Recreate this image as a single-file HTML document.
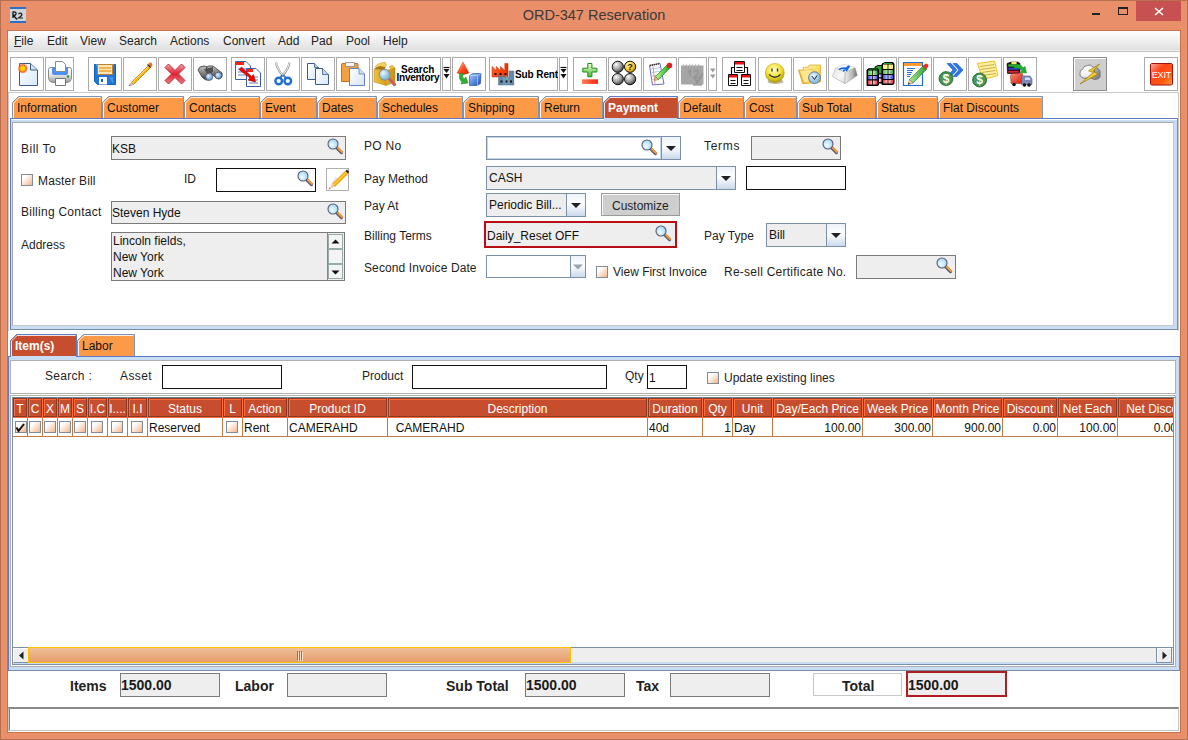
<!DOCTYPE html><html><head><meta charset="utf-8"><style>
*{box-sizing:border-box;margin:0;padding:0}
html,body{width:1188px;height:740px;overflow:hidden}
body{position:relative;background:#E9906A;font-family:"Liberation Sans",sans-serif;font-size:12px;color:#1a1a1a}
.a{position:absolute}
.t{position:absolute;white-space:nowrap;font-size:12px;line-height:14px;color:#1e1e1e}
.tb{position:absolute;top:57px;height:34px;border:1px solid #ababab;background:#fff}
.tb svg{position:absolute;left:0;top:0}
.tab{position:absolute;top:96px;height:22px;background:#FD9A48;border-top:1px solid #7d93b3;border-right:1px solid #8ea2c4}
.tab .tl{position:absolute;left:-1px;top:5px;width:1px;height:17px;background:#7d93b3}
.tab .tc{position:absolute;left:-1px;top:-1px;width:7px;height:7px;background:linear-gradient(to bottom right,#fff 0,#fff 45%,#7d93b3 45%,#7d93b3 60%,transparent 60%)}
.tab span{position:absolute;left:5px;top:3px;font-size:12px;line-height:14px;color:#111;white-space:nowrap}
.fld{position:absolute;background:#eee;border:1px solid #8e8e8e}
.fldw{position:absolute;background:#fff;border:1px solid #111}
.ft{position:absolute;left:1px;top:4px;font-size:12px;line-height:14px;color:#111;white-space:nowrap}
.cb{position:absolute;width:12px;height:12px;border:1px solid #7f8b96;background:linear-gradient(135deg,#fff 25%,#f3b58a 100%)}
.hd{position:absolute;top:398px;height:19px;background:#C64E2E;border:1px solid #ec8660;outline:1px solid #C64E2E;color:#fff;font-size:12px;line-height:16px;text-align:center;white-space:nowrap;overflow:hidden}
.cl{position:absolute;top:417px;height:19px;border-right:1px solid #d9946b;border-bottom:1px solid #d9946b;font-size:12px;line-height:18px;color:#111;white-space:nowrap;overflow:hidden}
</style></head><body>
<div class="a" style="left:0px;top:0px;width:1188px;height:740px;border:1px solid #B5704F"></div>
<div class="a" style="left:7px;top:30px;width:1174px;height:703px;border:1px solid #C8734C"></div>
<div class="a" style="left:8px;top:31px;width:1172px;height:701px;background:#fff"></div>
<div class="a" style="left:0;top:6px;width:1188px;text-align:center;font-size:14.5px;color:#3a3a3a;line-height:18px">ORD-347 Reservation</div>
<svg class="a" style="left:10px;top:7px" width="16" height="16"><rect x="0" y="0" width="16" height="16" fill="#cfd6d8"/><rect x="0" y="0" width="16" height="2" fill="#2a70c8"/><rect x="0" y="14" width="16" height="2" fill="#2a70c8"/><path d="M3 4.5V11M3 5Q6.5 4.5 6 7Q5.5 8.5 3.5 8.5L7 12.5" stroke="#111" stroke-width="1.3" fill="none"/><path d="M8.5 7Q10 5.5 11.5 6.5Q12.5 8 10.5 9.5L8.5 11H13" stroke="#222" stroke-width="1.2" fill="none"/></svg>
<div class="a" style="left:1092px;top:13px;width:8px;height:2px;background:#1e2326"></div>
<div class="a" style="left:1118px;top:7px;width:10px;height:8px;border:1px solid #1e2326;border-top-width:2px"></div>
<div class="a" style="left:1136px;top:1px;width:45px;height:20px;background:#C75050"></div>
<svg class="a" style="left:1154px;top:7px" width="10" height="9"><path d="M1 1L9 8M9 1L1 8" stroke="#fff" stroke-width="1.6"/></svg>
<div class="a" style="left:8px;top:31px;width:1172px;height:19px;background:linear-gradient(#fff,#e0e0e0)"></div>
<div class="a" style="left:8px;top:50px;width:1172px;height:1px;background:#f0f0f0"></div>
<div class="a" style="left:8px;top:51px;width:1172px;height:1px;background:#c4c4c4"></div>
<div class="t" style="left:14px;top:34px;font-size:12px;color:#222"><u>F</u>ile</div>
<div class="t" style="left:47px;top:34px;font-size:12px;color:#222">Edit</div>
<div class="t" style="left:80px;top:34px;font-size:12px;color:#222">View</div>
<div class="t" style="left:119px;top:34px;font-size:12px;color:#222">Search</div>
<div class="t" style="left:170px;top:34px;font-size:12px;color:#222">Actions</div>
<div class="t" style="left:223px;top:34px;font-size:12px;color:#222">Convert</div>
<div class="t" style="left:278px;top:34px;font-size:12px;color:#222">Add</div>
<div class="t" style="left:311px;top:34px;font-size:12px;color:#222">Pad</div>
<div class="t" style="left:346px;top:34px;font-size:12px;color:#222">Pool</div>
<div class="t" style="left:383px;top:34px;font-size:12px;color:#222">Help</div>
<div class="a" style="left:8px;top:92px;width:1171px;height:1px;background:#c9c9c9"></div>
<div class="a" style="left:8px;top:92px;width:1px;height:239px;background:#c9c9c9"></div>
<div class="a" style="left:1178px;top:92px;width:1px;height:239px;background:#c9c9c9"></div>
<div class="tb" style="left:10px;width:34px;"><svg style="position:absolute;left:-1px;top:-1px" width="34" height="34">
<defs><linearGradient id="i0g" x1="0" y1="0" x2="1" y2="1"><stop offset="0" stop-color="#ffffff"/><stop offset="1" stop-color="#d6e8f8"/></linearGradient>
<radialGradient id="i0s"><stop offset="0" stop-color="#ffe600"/><stop offset=".45" stop-color="#ffc000"/><stop offset=".7" stop-color="#ff5a1e"/><stop offset="1" stop-color="#ff5a1e" stop-opacity="0"/></radialGradient></defs>
<path d="M9.5 6.5H20.5L27.5 13V28.5H9.5Z" fill="url(#i0g)" stroke="#3f5a8a" stroke-width="1"/>
<path d="M20.5 6.5V13H27" fill="#cfe4f6" stroke="#3f5a8a" stroke-width="1"/>
<circle cx="12.7" cy="11.5" r="5.2" fill="url(#i0s)"/>
</svg></div>
<div class="tb" style="left:45px;width:29px;"><svg style="position:absolute;left:-1px;top:-1px" width="29" height="34">
<defs><linearGradient id="i1b" x1="0" y1="0" x2="0" y2="1"><stop offset="0" stop-color="#ffffff"/><stop offset=".5" stop-color="#e6e6e6"/><stop offset="1" stop-color="#9a9a9a"/></linearGradient></defs>
<path d="M3.5 12.5Q3.5 10.5 6 10.5H24Q26.5 10.5 26.5 12.5V20Q26.5 25.5 21 25.5H9Q3.5 25.5 3.5 20Z" fill="url(#i1b)" stroke="#8a8a8a" stroke-width="1"/>
<path d="M7 10.5H23V16Q23 18 21 18H9Q7 18 7 16Z" fill="#4f8ff0"/>
<path d="M10.5 4.5H17.5L20.5 7.5V14.5H10.5Z" fill="#fff" stroke="#8a8a8a" stroke-width="1"/>
<path d="M10.5 21.5H20.5V28.5H10.5Z" fill="#fff" stroke="#777" stroke-width="1"/>
<circle cx="23" cy="19.5" r="1.2" fill="#1fa02a"/>
</svg></div>
<div class="tb" style="left:88px;width:34px;"><svg style="position:absolute;left:-1px;top:-1px" width="34" height="34">
<path d="M6.5 7.5H27.5V27.5H9.5L6.5 24.5Z" fill="#1f78d8" stroke="#1060c0" stroke-width="1"/>
<path d="M8 8H26" stroke="#7cc0ff" stroke-width="1"/>
<path d="M9.5 7.5H24.5V17.5H9.5Z" fill="#fbe8b8" stroke="#c08030" stroke-width="1"/>
<path d="M11 11H23M11 14H23" stroke="#f0a030" stroke-width="1.6"/>
<path d="M11 20H19V27.5H11Z" fill="#fff"/>
<path d="M13 22H15V25H13Z" fill="#1f60c8"/>
<path d="M21 20H25V27" fill="#60a8f0" opacity=".6"/>
</svg></div>
<div class="tb" style="left:123px;width:34px;"><svg style="position:absolute;left:-1px;top:-1px" width="34" height="34">
<defs><linearGradient id="i3p" x1="0" y1="0" x2="1" y2="0"><stop offset="0" stop-color="#ffd23a"/><stop offset="1" stop-color="#e08a00"/></linearGradient></defs>
<path d="M4 29L12 18L14 21Z" fill="#d8d8d8" opacity=".5"/>
<path d="M8.5 25.5L26 8L28 10L10.5 27.5Z" fill="#ffb400" stroke="#c07800" stroke-width=".8"/>
<path d="M9 26L26.5 8.5" stroke="#ffe27a" stroke-width="1"/>
<path d="M8.5 25.5L10.5 27.5L6 29Z" fill="#f0d0a0" stroke="#888" stroke-width=".5"/>
<path d="M6 29L7 27.5L7.5 28.5Z" fill="#333"/>
<path d="M25 7L27 5.5Q29 5 29 7L29.5 9L28 10Z" fill="#ff6a20"/>
<path d="M24.5 7.5L27.5 10.5" stroke="#333" stroke-width="1.2"/>
</svg></div>
<div class="tb" style="left:158px;width:34px;"><svg style="position:absolute;left:-1px;top:-1px" width="34" height="34">
<defs><linearGradient id="i4x" x1="0" y1="0" x2="0" y2="1"><stop offset="0" stop-color="#f7a0a8"/><stop offset=".5" stop-color="#e02030"/><stop offset="1" stop-color="#f08088"/></linearGradient></defs>
<path d="M7 10.5L10.5 7L17 13.5L23.5 7L27 10.5L20.5 17L27 23.5L23.5 27L17 20.5L10.5 27L7 23.5L13.5 17Z" fill="url(#i4x)" stroke="#b83040" stroke-width="1"/>
</svg></div>
<div class="tb" style="left:193px;width:34px;"><svg style="position:absolute;left:-1px;top:-1px" width="34" height="34">
<defs><linearGradient id="i5b" x1="0" y1="0" x2="0" y2="1"><stop offset="0" stop-color="#c8c8c8"/><stop offset="1" stop-color="#3c3c3c"/></linearGradient>
<radialGradient id="i5l" cx=".4" cy=".4"><stop offset="0" stop-color="#e8f4ff"/><stop offset="1" stop-color="#6aa2e8"/></radialGradient></defs>
<path d="M5 13Q6 9 11 9L19 11L14 18L16 23Q12 24 9 20Z" fill="url(#i5b)" stroke="#333" stroke-width=".8"/>
<path d="M13 11Q15 8 20 9L29 16Q30 21 26 22L23 21Z" fill="url(#i5b)" stroke="#333" stroke-width=".8"/>
<path d="M11 12L20 10L20 15L14 17Z" fill="#505050"/>
<circle cx="16.2" cy="19.8" r="3.6" fill="url(#i5l)" stroke="#555" stroke-width=".8"/>
<circle cx="25.3" cy="18.5" r="3.4" fill="url(#i5l)" stroke="#555" stroke-width=".8"/>
</svg></div>
<div class="tb" style="left:231px;width:34px;"><svg style="position:absolute;left:-1px;top:-1px" width="34" height="34">
<path d="M4.5 4.5H15L19.5 9V22.5H4.5Z" fill="#fff" stroke="#3a5fb0" stroke-width="1"/>
<path d="M5 5H13V8H5Z" fill="#ff2010"/>
<path d="M7 12H17M7 15H17M7 18H17" stroke="#3a5fb0" stroke-width=".8"/>
<path d="M15.5 11.5H25L29.5 16V29.5H15.5Z" fill="#fff" stroke="#3a5fb0" stroke-width="1"/>
<path d="M16 12H22V15H16Z" fill="#ff2010"/>
<path d="M18 20H27M18 23H27M18 26H27" stroke="#3a5fb0" stroke-width=".8"/>
<path d="M8 12.5L10.5 10L20.5 19.5L22.5 17.5L24.5 25L17 23L19 21Z" fill="#ff0000" stroke="#900" stroke-width=".6"/>
</svg></div>
<div class="tb" style="left:266px;width:34px;"><svg style="position:absolute;left:-1px;top:-1px" width="34" height="34">
<path d="M10 5.5Q11 12 16.5 18" stroke="#9a9a9a" stroke-width="2.2" fill="none"/>
<path d="M10 5.5Q11 12 16.5 18" stroke="#f2f2f2" stroke-width="1" fill="none"/>
<path d="M23.5 5.5Q22.5 12 17 18" stroke="#9a9a9a" stroke-width="2.2" fill="none"/>
<path d="M23.5 5.5Q22.5 12 17 18" stroke="#f2f2f2" stroke-width="1" fill="none"/>
<path d="M16.5 18L14 21M17 18L20 21" stroke="#4a7ab8" stroke-width="2"/>
<circle cx="12.7" cy="24" r="3.3" fill="none" stroke="#1e6fd0" stroke-width="2.4"/>
<circle cx="21.8" cy="24" r="3.3" fill="none" stroke="#1e6fd0" stroke-width="2.4"/>
</svg></div>
<div class="tb" style="left:301px;width:34px;"><svg style="position:absolute;left:-1px;top:-1px" width="34" height="34">
<defs><linearGradient id="i8d" x1="0" y1="0" x2="1" y2="1"><stop offset="0" stop-color="#ffffff"/><stop offset="1" stop-color="#d8e8f8"/></linearGradient></defs>
<path d="M6.5 6.5H13.5L17.5 10.5V22.5H6.5Z" fill="url(#i8d)" stroke="#3f5a8a" stroke-width="1"/>
<path d="M13.5 6.5V10.5H17.5" fill="#bcd8f0" stroke="#3f5a8a" stroke-width=".8"/>
<path d="M14.5 11.5H21.5L27.5 17.5V27.5H14.5Z" fill="url(#i8d)" stroke="#3f5a8a" stroke-width="1"/>
<path d="M21.5 11.5V17.5H27.5" fill="#bcd8f0" stroke="#3f5a8a" stroke-width=".8"/>
</svg></div>
<div class="tb" style="left:336px;width:34px;"><svg style="position:absolute;left:-1px;top:-1px" width="34" height="34">
<defs><linearGradient id="i9d" x1="0" y1="0" x2="1" y2="1"><stop offset="0" stop-color="#ffffff"/><stop offset="1" stop-color="#d4e6f8"/></linearGradient></defs>
<path d="M5.5 7.5Q5.5 6.5 6.5 6.5H21Q22 6.5 22 7.5V24.5H5.5Z" fill="#f2a040" stroke="#c07020" stroke-width="1"/>
<path d="M9.5 5.5H18.5V9.5H9.5Z" fill="#f4f4f4" stroke="#888" stroke-width=".8"/>
<path d="M13.5 11.5H23L28.5 17V28.5H13.5Z" fill="url(#i9d)" stroke="#6a80c0" stroke-width="1"/>
<path d="M23 11.5V17H28.5" fill="#c8dcf0" stroke="#6a80c0" stroke-width=".8"/>
</svg></div>
<div class="tb" style="left:372px;width:69px;"><svg style="position:absolute;left:-1px;top:-1px" width="69" height="34">
<defs><linearGradient id="i10b" x1="0" y1="0" x2="1" y2="0"><stop offset="0" stop-color="#f0c040"/><stop offset="1" stop-color="#d8a020"/></linearGradient>
<linearGradient id="i10r" x1="0" y1="0" x2="1" y2="0"><stop offset="0" stop-color="#e8b030"/><stop offset="1" stop-color="#c89010"/></linearGradient>
<radialGradient id="i10l" cx=".35" cy=".35"><stop offset="0" stop-color="#eefaff"/><stop offset="1" stop-color="#88c0e0"/></radialGradient></defs>
<path d="M3 10L6 7L13 5L14.5 8L13 11Z" fill="#f8d060" stroke="#c89020" stroke-width=".5"/>
<path d="M17 10L20 8L23 11L20 13Z" fill="#f0c040" stroke="#c89020" stroke-width=".5"/>
<path d="M2 12L13 14L14 28.5L2 25Z" fill="url(#i10b)" stroke="#b88818" stroke-width=".5"/>
<path d="M13 14L23 11V25L14 28.5Z" fill="url(#i10r)" stroke="#b88818" stroke-width=".5"/>
<path d="M3 11L8 9L13 10L13 13.5L2.5 12Z" fill="#a87810"/>
<path d="M17.5 22L22.5 27.5" stroke="#8a8aa0" stroke-width="3.4" stroke-linecap="round"/>
<path d="M17.8 22.2L22.2 27.2" stroke="#f05030" stroke-width="2" stroke-linecap="round" stroke-dasharray="1.2 1"/>
<circle cx="12.7" cy="17.7" r="5.4" fill="url(#i10l)" stroke="#8a8a8a" stroke-width="1"/>
<text x="29" y="15.5" font-family="Liberation Sans" font-weight="bold" font-size="10" fill="#000" letter-spacing="0">Search</text>
<text x="24.5" y="24" font-family="Liberation Sans" font-weight="bold" font-size="10" fill="#000" letter-spacing="-0.25">Inventory</text>
</svg></div>
<div class="tb" style="left:442px;width:9px;"><svg style="position:absolute;left:-1px;top:-1px" width="9" height="34"><path d="M1.5 10.5H7.5" stroke="#111" stroke-width="1.2"/><path d="M1.5 12H7.5L4.5 16Z" fill="#111"/>
<path d="M1.5 17H7.5L4.5 21.5Z" fill="#111"/></svg></div>
<div class="tb" style="left:452px;width:34px;"><svg style="position:absolute;left:-1px;top:-1px" width="34" height="34">
<defs><linearGradient id="i12c" x1="0" y1="0" x2="1" y2="1"><stop offset="0" stop-color="#ffd0a0"/><stop offset=".5" stop-color="#ff5020"/><stop offset="1" stop-color="#d02010"/></linearGradient>
<linearGradient id="i12b" x1="0" y1="0" x2="1" y2="1"><stop offset="0" stop-color="#a8d0ff"/><stop offset="1" stop-color="#1848b8"/></linearGradient></defs>
<path d="M11 5L17 16Q11 19 5 16Z" fill="url(#i12c)" stroke="#e04010" stroke-width=".5"/>
<path d="M8 16Q6 22 10 25L9 27L16 26L14 20L12 22Q10 20 11 17Z" fill="#30b030" stroke="#208020" stroke-width=".5"/>
<path d="M17.5 18.5L21 16.5H29L28.5 26.5L25 28.5H17.5Z" fill="url(#i12b)" stroke="#2040a0" stroke-width=".6"/>
<path d="M17.5 18.5H25.5L29 16.5M25.5 18.5V28.5" stroke="#c8e0ff" stroke-width=".6" fill="none"/>
</svg></div>
<div class="tb" style="left:489px;width:69px;"><svg style="position:absolute;left:-1px;top:-1px" width="69" height="34">
<defs><linearGradient id="i13r" x1="0" x2="1"><stop offset="0" stop-color="#ff5a20"/><stop offset=".8" stop-color="#ff3a00"/><stop offset="1" stop-color="#e03000"/></linearGradient>
<linearGradient id="i13b" x1="0" x2="1"><stop offset="0" stop-color="#5a82a0"/><stop offset=".5" stop-color="#7aa0bc"/><stop offset="1" stop-color="#5a82a0"/></linearGradient></defs>
<path d="M3 20V9.5L7.3 13.5V9.5L11.5 13.5V9.5L15.8 13.5V6.5H19V20Z" fill="url(#i13r)" stroke="#c02800" stroke-width=".5"/>
<path d="M5.5 17H7.5M10.5 17H12.5M15.5 17H17.5" stroke="#111" stroke-width="2"/>
<path d="M9.5 28V18L13 21V18L16.5 21V18L20 21V14H24.8V28Z" fill="url(#i13b)" stroke="#4a6a88" stroke-width=".5"/>
<path d="M11.5 24.5H13.5M16.5 24.5H18.5M21 24.5H23" stroke="#111" stroke-width="2"/>
<text x="26" y="21" font-family="Liberation Sans" font-weight="bold" font-size="10" fill="#000" letter-spacing="-0.1">Sub Rent</text>
</svg></div>
<div class="tb" style="left:559px;width:9px;"><svg style="position:absolute;left:-1px;top:-1px" width="9" height="34"><path d="M1.5 10.5H7.5" stroke="#111" stroke-width="1.2"/><path d="M1.5 12H7.5L4.5 16Z" fill="#111"/>
<path d="M1.5 17H7.5L4.5 21.5Z" fill="#111"/></svg></div>
<div class="tb" style="left:573px;width:34px;"><svg style="position:absolute;left:-1px;top:-1px" width="34" height="34">
<defs><linearGradient id="i15p" x1="0" y1="0" x2="0" y2="1"><stop offset="0" stop-color="#f4ffd8"/><stop offset="1" stop-color="#48b830"/></linearGradient>
<linearGradient id="i15m" x1="0" y1="0" x2="1" y2="0"><stop offset="0" stop-color="#ff8050"/><stop offset="1" stop-color="#ff2010"/></linearGradient></defs>
<path d="M14.8 6.5H18.9V11.2H23.9V15H18.9V19.8H14.8V15H9.8V11.2H14.8Z" fill="url(#i15p)" stroke="#1f8a1a" stroke-width="1"/>
<path d="M9 22.3H25V26.9H9Z" fill="url(#i15m)"/>
</svg></div>
<div class="tb" style="left:608px;width:34px;"><svg style="position:absolute;left:-1px;top:-1px" width="34" height="34">
<defs><radialGradient id="i16g" cx=".35" cy=".3" r=".75"><stop offset="0" stop-color="#fafafa"/><stop offset=".6" stop-color="#9a9a9a"/><stop offset="1" stop-color="#3a3a3a"/></radialGradient>
<radialGradient id="i16y" cx=".35" cy=".3" r=".75"><stop offset="0" stop-color="#fff8c0"/><stop offset=".6" stop-color="#ffc820"/><stop offset="1" stop-color="#c08000"/></radialGradient></defs>
<circle cx="9.8" cy="9.8" r="5.6" fill="url(#i16g)" stroke="#111" stroke-width="1"/>
<circle cx="22.1" cy="9.8" r="5.6" fill="url(#i16y)" stroke="#111" stroke-width="1"/>
<circle cx="9.8" cy="22.1" r="5.6" fill="url(#i16g)" stroke="#111" stroke-width="1"/>
<circle cx="22.1" cy="22.1" r="5.6" fill="url(#i16g)" stroke="#111" stroke-width="1"/>
<text x="22.1" y="13.3" text-anchor="middle" font-family="Liberation Sans" font-weight="bold" font-size="9" fill="#111">?</text>
</svg></div>
<div class="tb" style="left:643px;width:34px;"><svg style="position:absolute;left:-1px;top:-1px" width="34" height="34">
<defs><linearGradient id="i17g" x1="0" y1="0" x2="1" y2="0"><stop offset="0" stop-color="#b0ff80"/><stop offset="1" stop-color="#20a020"/></linearGradient></defs>
<path d="M6.5 8.5L17 6.5L21 27L9.5 28Z" fill="#fff" stroke="#6a70c8" stroke-width="1"/>
<path d="M8 12L18 10.5M8.5 15.5L18.5 14M9 19L19 17.5M9.5 22.5L19.5 21" stroke="#8ab0e8" stroke-width=".7"/>
<path d="M10 9L12 27" stroke="#f08060" stroke-width=".8"/>
<path d="M7 8.5L17 6.5" stroke="#333" stroke-width="1.8" stroke-dasharray="1 1"/>
<path d="M12.5 19.5L24.5 7.5L27.5 10.5L15.5 22.5Z" fill="url(#i17g)" stroke="#208020" stroke-width=".7"/>
<path d="M12.5 19.5L15.5 22.5L11.5 23.5Z" fill="#f0d090" stroke="#555" stroke-width=".5"/>
<circle cx="26.5" cy="8.5" r="2.8" fill="#e02020"/>
</svg></div>
<div class="tb" style="left:678px;width:29px;"><svg style="position:absolute;left:-1px;top:-1px" width="29" height="34">
<path d="M3 8.5H25.5V27.5H3Z" fill="#a6a6a6"/>
<path d="M15 26H24V28.7H15Z" fill="#a0a0a0"/>
<path d="M5 7.5L22 7.5L23 9V11H5Z" fill="#b0b0b0"/>
<g fill="#f4f4f4"><rect x="6" y="6.5" width="2" height="2"/><rect x="9" y="6.5" width="2" height="2"/><rect x="12" y="6.5" width="2" height="2"/><rect x="15" y="6.5" width="2" height="2"/><rect x="18" y="6.5" width="2" height="2"/><rect x="21" y="6.5" width="2" height="2"/></g>
<path d="M7.5 9L7 11.5M10.5 9L10 11.5M13.5 9L13 11.5M16.5 9L16 11.5M19.5 9L19 11.5M22.5 9L22 11.5" stroke="#8a8a8a" stroke-width=".8"/>
<path d="M10 15L12 13.5V20" stroke="#949494" stroke-width="1.6" fill="none"/>
<path d="M15.5 15Q16.5 13 19 13.5Q21 14.5 19.5 17L16 20.5H21" stroke="#949494" stroke-width="1.4" fill="none"/>
<path d="M16 19.7L19.2 25.7L24.7 16.5" stroke="#949494" stroke-width="1.8" fill="none"/>
</svg></div>
<div class="tb" style="left:708px;width:9px;"><svg style="position:absolute;left:-1px;top:-1px" width="9" height="34"><path d="M2 11.5H7.5L4.8 15.5Z" fill="#9a9a9a"/><path d="M2 17.5H7.5L4.8 21.5Z" fill="#9a9a9a"/></svg></div>
<div class="tb" style="left:722px;width:34px;"><svg style="position:absolute;left:-1px;top:-1px" width="34" height="34">
<path d="M9.5 17.5V10.5H25.5V17.5" fill="none" stroke="#111" stroke-width="1.2"/>
<path d="M12.5 4.5H22.5V15.5H12.5Z" fill="#fff" stroke="#111" stroke-width="1"/>
<path d="M13 5H22V7.5H13Z" fill="#f01010"/>
<path d="M14.5 10.5H20.5M14.5 13.5H20.5" stroke="#111" stroke-width="1"/>
<path d="M6.5 17.5H15.5V28.5H6.5Z" fill="#fff" stroke="#111" stroke-width="1"/>
<path d="M7 18H15V20.5H7Z" fill="#f01010"/>
<path d="M8.5 23.5H13.5M8.5 26.5H13.5" stroke="#111" stroke-width="1"/>
<path d="M19.5 17.5H28.5V28.5H19.5Z" fill="#fff" stroke="#111" stroke-width="1"/>
<path d="M20 18H28V20.5H20Z" fill="#f01010"/>
<path d="M21.5 23.5H26.5M21.5 26.5H26.5" stroke="#111" stroke-width="1"/>
</svg></div>
<div class="tb" style="left:758px;width:34px;"><svg style="position:absolute;left:-1px;top:-1px" width="34" height="34">
<defs><radialGradient id="i21y" cx=".45" cy=".35" r=".7"><stop offset="0" stop-color="#fffbd0"/><stop offset=".55" stop-color="#f4e030"/><stop offset="1" stop-color="#a09000"/></radialGradient></defs>
<ellipse cx="17.5" cy="24.5" rx="8" ry="2.5" fill="#5a4a10" opacity=".4"/>
<circle cx="16.8" cy="15.9" r="9.5" fill="url(#i21y)" stroke="#a89800" stroke-width=".5"/>
<path d="M14 11.5V14.5M19.5 11.5V14.5" stroke="#333" stroke-width="1.3"/>
<path d="M11 17.5Q16.8 23 22.5 17.5" stroke="#333" stroke-width="1.3" fill="none"/>
</svg></div>
<div class="tb" style="left:793px;width:34px;"><svg style="position:absolute;left:-1px;top:-1px" width="34" height="34">
<defs><linearGradient id="i22f" x1="0" y1="0" x2="1" y2="1"><stop offset="0" stop-color="#fff6b0"/><stop offset="1" stop-color="#f0c820"/></linearGradient>
<radialGradient id="i22c" cx=".4" cy=".35"><stop offset="0" stop-color="#f0fbff"/><stop offset="1" stop-color="#8ac0e8"/></radialGradient></defs>
<path d="M5.5 13H11L13 26.5H9.5Z" fill="#f0b830" stroke="#d09010" stroke-width=".6"/>
<path d="M10 10.5L15 10L16.5 8H27.5V25L13 26.5Z" fill="url(#i22f)" stroke="#d8a020" stroke-width=".7"/>
<path d="M6.5 13.5L20 12.5L19 24L11 26Z" fill="#fde890" stroke="#e0b030" stroke-width=".5"/>
<circle cx="21.5" cy="20.7" r="5.9" fill="url(#i22c)" stroke="#707888" stroke-width="1"/>
<path d="M18.8 19L21.5 22.5L24 18.5" stroke="#222" stroke-width="1" fill="none"/>
</svg></div>
<div class="tb" style="left:828px;width:34px;"><svg style="position:absolute;left:-1px;top:-1px" width="34" height="34">
<defs><linearGradient id="i23l" x1="0" y1="0" x2="1" y2="1"><stop offset="0" stop-color="#e4e4e4"/><stop offset=".6" stop-color="#f8f8f8"/><stop offset="1" stop-color="#d8d8d8"/></linearGradient>
<linearGradient id="i23r" x1="0" y1="0" x2="1" y2="0"><stop offset="0" stop-color="#f0f0f0"/><stop offset=".6" stop-color="#b8b8b8"/><stop offset="1" stop-color="#6a6a6a"/></linearGradient></defs>
<path d="M7.7 11L16 7.3L27 10.5L29.3 18.3L16.9 26.6L4.3 19.3Z" fill="#9a9a9a" opacity=".5" transform="translate(0 .5)"/>
<path d="M7.7 11L17.3 15.1L16.9 26.6L4.3 19.3Z" fill="url(#i23l)" stroke="#b0b0b0" stroke-width=".5"/>
<path d="M17.3 15.1L27 10.5L29.3 18.3L16.9 26.6Z" fill="url(#i23r)" stroke="#a0a0a0" stroke-width=".5"/>
<path d="M7.7 11L16 7.3L27 10.5L17.3 15.1Z" fill="#fafafa" stroke="#c8c8c8" stroke-width=".6"/>
<path d="M11.5 12.2Q15 10.5 19 11.5M15.5 13.8L20.5 9.3L21 9.6L18.5 13.5" stroke="#1a6ae8" stroke-width="1.7" fill="none" stroke-linecap="round"/>
</svg></div>
<div class="tb" style="left:863px;width:34px;"><svg style="position:absolute;left:-1px;top:-1px" width="34" height="34">
<defs>
<linearGradient id="cg" x1="0" x2="1"><stop offset="0" stop-color="#40b040"/><stop offset=".5" stop-color="#c8f0c0"/><stop offset="1" stop-color="#30a030"/></linearGradient>
<linearGradient id="cb" x1="0" x2="1"><stop offset="0" stop-color="#3038e8"/><stop offset=".5" stop-color="#d0d4ff"/><stop offset="1" stop-color="#3038e8"/></linearGradient>
<linearGradient id="cr" x1="0" x2="1"><stop offset="0" stop-color="#f02030"/><stop offset=".5" stop-color="#ffd0d4"/><stop offset="1" stop-color="#f02030"/></linearGradient>
<linearGradient id="cy" x1="0" x2="1"><stop offset="0" stop-color="#f0f040"/><stop offset=".5" stop-color="#ffffc0"/><stop offset="1" stop-color="#e8e830"/></linearGradient>
</defs>
<g stroke="#000" stroke-width="1">
<path d="M12 10L15 8.5H21V26H12Z" fill="#30a030"/>
<path d="M13 17H20V21H13Z" fill="url(#cb)"/><path d="M13 21H20V25.5H13Z" fill="url(#cr)"/>
<path d="M19 7L22 5.5H30L31 7V26.5L29.5 27.5H19Z" fill="#000"/>
<path d="M19.5 7H30.5V12.5H19.5Z" fill="url(#cy)"/>
<path d="M19.5 12.5H30.5V17.5H19.5Z" fill="url(#cg)"/>
<path d="M19.5 17.5H30.5V22.5H19.5Z" fill="url(#cb)"/>
<path d="M19.5 22.5H30.5V27H19.5Z" fill="url(#cr)"/>
<path d="M25 7V27" stroke-width=".8"/>
<path d="M4 13L6 11.5H14.5L15.5 13V28L14 28.5H4Z" fill="#000"/>
<path d="M4.5 13H15V18.5H4.5Z" fill="url(#cg)"/>
<path d="M4.5 18.5H15V23H4.5Z" fill="url(#cb)"/>
<path d="M4.5 23H15V28H4.5Z" fill="url(#cr)"/>
<path d="M9.5 13V28" stroke-width=".8"/>
</g>
<path d="M6 12H14M21 6.5H29" stroke="#20a020" stroke-width="1"/>
</svg></div>
<div class="tb" style="left:898px;width:34px;"><svg style="position:absolute;left:-1px;top:-1px" width="34" height="34">
<defs><linearGradient id="i25g" x1="0" y1="0" x2="1" y2="0"><stop offset="0" stop-color="#a8e890"/><stop offset="1" stop-color="#2a9a30"/></linearGradient></defs>
<path d="M5.5 5.5H24.5V28.5H5.5Z" fill="#fff" stroke="#1f6fd0" stroke-width="1.2"/>
<path d="M6 6H24V9H6Z" fill="#ff9a30"/>
<path d="M9 11.5H17M9 13.5H15M9 15.5H14M9 17.5H13M9 19.5H12" stroke="#2a70d0" stroke-width="1"/>
<path d="M18 21L19 28H8Z" fill="#d8e8f8" opacity=".6"/>
<path d="M11.5 22.5L25.5 8.5L29 12L15 26Z" fill="url(#i25g)" stroke="#2a7a2a" stroke-width=".6"/>
<path d="M11.5 22.5L15 26L10 27.5Z" fill="#f8d890" stroke="#666" stroke-width=".5"/>
<path d="M10 27.5L10.8 25.5L12 26.8Z" fill="#111"/>
<path d="M24.5 9.5L27 7Q28.5 6 30 7.5Q31 9 30 10L27.5 12.5Z" fill="#e83020"/>
</svg></div>
<div class="tb" style="left:933px;width:34px;"><svg style="position:absolute;left:-1px;top:-1px" width="34" height="34">
<path d="M14 6.5L18 6.5L24 13L18 19.5H14L20 13Z" fill="#2a78e8" stroke="#1850c0" stroke-width=".6"/>
<path d="M20 6.5H24L30 13L24 19.5H20L26 13Z" fill="#2a78e8" stroke="#1850c0" stroke-width=".6"/>
<circle cx="13" cy="21.6" r="7" fill="#3a8a48" stroke="#2a6a38" stroke-width=".8"/>
<circle cx="13" cy="21.6" r="5.8" fill="#4a9a58"/>
<text x="13" y="25.8" text-anchor="middle" font-family="Liberation Sans" font-weight="bold" font-size="12" fill="#fff">$</text></svg></div>
<div class="tb" style="left:968px;width:34px;"><svg style="position:absolute;left:-1px;top:-1px" width="34" height="34">
<path d="M9.5 6.5L26.5 4L30 18.5L15 22.5Z" fill="#fdf0a0" stroke="#f0c020" stroke-width="1"/>
<path d="M12 9.5L26 7.5M12.5 12.5L27 10.5M13.5 15.5L27.5 13.5M14 18.5L28 16.5" stroke="#c8a838" stroke-width=".9"/>
<circle cx="11.6" cy="23" r="7" fill="#3a8a48" stroke="#2a6a38" stroke-width=".8"/>
<circle cx="11.6" cy="23" r="5.8" fill="#4a9a58"/>
<text x="11.6" y="27.2" text-anchor="middle" font-family="Liberation Sans" font-weight="bold" font-size="12" fill="#fff">$</text></svg></div>
<div class="tb" style="left:1003px;width:34px;"><svg style="position:absolute;left:-1px;top:-1px" width="34" height="34">
<g stroke="#111" stroke-width=".6">
<path d="M4 6.5L8 5H15L17 6.5V15.5L14 16.5H4.5Z" fill="#111"/>
<path d="M5 7H16V10H5Z" fill="#30b030"/><path d="M5 10.5H16V13H5Z" fill="#3040e0"/><path d="M5 13.5H16V16H5Z" fill="#e02030"/>
</g>
<ellipse cx="11" cy="6" rx="3" ry="1.3" fill="#f0f060"/>
<path d="M11 8Q18 6 20 11L22 9.5L23.5 16L17 15.5L19 13.5Q17 10.5 11 11Z" fill="#20b030" stroke="#108020" stroke-width=".5"/>
<defs><linearGradient id="i28t" x1="0" y1="0" x2="1" y2="1"><stop offset="0" stop-color="#ff8a70"/><stop offset="1" stop-color="#d02010"/></linearGradient></defs>
<path d="M7.5 18.5L9 16.5H19.5V26.5H8Z" fill="url(#i28t)" stroke="#a02010" stroke-width=".5"/>
<path d="M18.5 19H27L29 22V27.5H18.5Z" fill="#8088b8" stroke="#505880" stroke-width=".6"/>
<path d="M22 20.5H26.5L27.5 23H22Z" fill="#d0e0ff"/>
<circle cx="11" cy="27.5" r="1.8" fill="#111"/><circle cx="21.5" cy="28" r="1.8" fill="#111"/><circle cx="26" cy="28" r="1.8" fill="#111"/>
</svg></div>
<div class="tb" style="left:1073px;width:34px;background:#cfcfcf;border-color:#8c8c8c"><svg style="position:absolute;left:-1px;top:-1px" width="34" height="34">
<defs><radialGradient id="i29c" cx=".3" cy=".3" r=".9"><stop offset="0" stop-color="#ffffff"/><stop offset=".55" stop-color="#f0f0f0"/><stop offset="1" stop-color="#a8a8a8"/></radialGradient>
<linearGradient id="i29d" x1="0" y1="0" x2="1" y2="1"><stop offset="0" stop-color="#c8c8c8"/><stop offset="1" stop-color="#707070"/></linearGradient></defs>
<path d="M1 1.5H33M1.5 1V33" stroke="#fff" stroke-width="1"/>
<path d="M19 11Q23 9 25.5 12Q28 14 27 17Q28 21 24.5 22Q21 23.5 18 21Z" fill="url(#i29d)" stroke="#555" stroke-width=".6"/>
<path d="M9 20.5Q6.5 19.5 7 16.5Q6.5 13 9.5 12.5Q10.5 8.5 14.5 8.5Q17.5 7 19.5 9.5Q22 10.5 21.5 13.5Q22.5 17.5 19.5 19.5Q17 22 13.5 21Q11 22 9 20.5Z" fill="url(#i29c)" stroke="#444" stroke-width=".6"/>
<path d="M26.5 7L15.5 13.8L20.5 15.6L7 27L25 17L19.8 14.2Z" fill="#f8d020" stroke="#8a6a00" stroke-width=".6" stroke-linejoin="round"/>
</svg></div>
<div class="tb" style="left:1144px;width:34px;"><svg style="position:absolute;left:-1px;top:-1px" width="34" height="34">
<defs><linearGradient id="i30e" x1="0" y1="0" x2="1" y2="1"><stop offset="0" stop-color="#f0b0a0"/><stop offset=".35" stop-color="#ff4418"/><stop offset=".7" stop-color="#ff5a10"/><stop offset="1" stop-color="#ffa040"/></linearGradient></defs>
<path d="M7.5 6.5H27.5L28.5 7.5V27L27.5 28H7.5L6.5 27V7.5Z" fill="url(#i30e)" stroke="#a01010" stroke-width="1"/>
<text x="17.4" y="21" text-anchor="middle" font-family="Liberation Sans" font-size="9" fill="#fff" letter-spacing="-0.2">EXIT</text>
</svg></div>
<div class="a" style="left:12px;top:96px;width:90px;height:22px;"><svg class="a" style="left:0;top:0" width="90" height="22"><path d="M0.5 22V6.5L6.5 0.5H89.5V22" fill="#FD9A48" stroke="#7d93b3" stroke-width="1"/><path d="M1.5 22V7L7 1.5H88.5" fill="none" stroke="#fff" stroke-width="1" opacity=".85"/></svg><span class="t" style="left:5px;top:5px;color:#111">Information</span></div>
<div class="a" style="left:102px;top:96px;width:82px;height:22px;"><svg class="a" style="left:0;top:0" width="82" height="22"><path d="M0.5 22V6.5L6.5 0.5H81.5V22" fill="#FD9A48" stroke="#7d93b3" stroke-width="1"/><path d="M1.5 22V7L7 1.5H80.5" fill="none" stroke="#fff" stroke-width="1" opacity=".85"/></svg><span class="t" style="left:5px;top:5px;color:#111">Customer</span></div>
<div class="a" style="left:184px;top:96px;width:76px;height:22px;"><svg class="a" style="left:0;top:0" width="76" height="22"><path d="M0.5 22V6.5L6.5 0.5H75.5V22" fill="#FD9A48" stroke="#7d93b3" stroke-width="1"/><path d="M1.5 22V7L7 1.5H74.5" fill="none" stroke="#fff" stroke-width="1" opacity=".85"/></svg><span class="t" style="left:5px;top:5px;color:#111">Contacts</span></div>
<div class="a" style="left:260px;top:96px;width:57px;height:22px;"><svg class="a" style="left:0;top:0" width="57" height="22"><path d="M0.5 22V6.5L6.5 0.5H56.5V22" fill="#FD9A48" stroke="#7d93b3" stroke-width="1"/><path d="M1.5 22V7L7 1.5H55.5" fill="none" stroke="#fff" stroke-width="1" opacity=".85"/></svg><span class="t" style="left:5px;top:5px;color:#111">Event</span></div>
<div class="a" style="left:317px;top:96px;width:60px;height:22px;"><svg class="a" style="left:0;top:0" width="60" height="22"><path d="M0.5 22V6.5L6.5 0.5H59.5V22" fill="#FD9A48" stroke="#7d93b3" stroke-width="1"/><path d="M1.5 22V7L7 1.5H58.5" fill="none" stroke="#fff" stroke-width="1" opacity=".85"/></svg><span class="t" style="left:5px;top:5px;color:#111">Dates</span></div>
<div class="a" style="left:377px;top:96px;width:86px;height:22px;"><svg class="a" style="left:0;top:0" width="86" height="22"><path d="M0.5 22V6.5L6.5 0.5H85.5V22" fill="#FD9A48" stroke="#7d93b3" stroke-width="1"/><path d="M1.5 22V7L7 1.5H84.5" fill="none" stroke="#fff" stroke-width="1" opacity=".85"/></svg><span class="t" style="left:5px;top:5px;color:#111">Schedules</span></div>
<div class="a" style="left:463px;top:96px;width:76px;height:22px;"><svg class="a" style="left:0;top:0" width="76" height="22"><path d="M0.5 22V6.5L6.5 0.5H75.5V22" fill="#FD9A48" stroke="#7d93b3" stroke-width="1"/><path d="M1.5 22V7L7 1.5H74.5" fill="none" stroke="#fff" stroke-width="1" opacity=".85"/></svg><span class="t" style="left:5px;top:5px;color:#111">Shipping</span></div>
<div class="a" style="left:539px;top:96px;width:64px;height:22px;"><svg class="a" style="left:0;top:0" width="64" height="22"><path d="M0.5 22V6.5L6.5 0.5H63.5V22" fill="#FD9A48" stroke="#7d93b3" stroke-width="1"/><path d="M1.5 22V7L7 1.5H62.5" fill="none" stroke="#fff" stroke-width="1" opacity=".85"/></svg><span class="t" style="left:5px;top:5px;color:#111">Return</span></div>
<div class="a" style="left:603px;top:96px;width:75px;height:22px;"><svg class="a" style="left:0;top:0" width="75" height="22"><path d="M0.5 22V6.5L6.5 0.5H74.5V22" fill="#C64E2E" stroke="#5b7cc1" stroke-width="1"/><path d="M1.5 22V7L7 1.5H73.5" fill="none" stroke="#fff" stroke-width="1" opacity=".85"/></svg><span class="t" style="left:5px;top:5px;color:#fff;font-weight:bold">Payment</span></div>
<div class="a" style="left:678px;top:96px;width:66px;height:22px;"><svg class="a" style="left:0;top:0" width="66" height="22"><path d="M0.5 22V6.5L6.5 0.5H65.5V22" fill="#FD9A48" stroke="#7d93b3" stroke-width="1"/><path d="M1.5 22V7L7 1.5H64.5" fill="none" stroke="#fff" stroke-width="1" opacity=".85"/></svg><span class="t" style="left:5px;top:5px;color:#111">Default</span></div>
<div class="a" style="left:744px;top:96px;width:53px;height:22px;"><svg class="a" style="left:0;top:0" width="53" height="22"><path d="M0.5 22V6.5L6.5 0.5H52.5V22" fill="#FD9A48" stroke="#7d93b3" stroke-width="1"/><path d="M1.5 22V7L7 1.5H51.5" fill="none" stroke="#fff" stroke-width="1" opacity=".85"/></svg><span class="t" style="left:5px;top:5px;color:#111">Cost</span></div>
<div class="a" style="left:797px;top:96px;width:79px;height:22px;"><svg class="a" style="left:0;top:0" width="79" height="22"><path d="M0.5 22V6.5L6.5 0.5H78.5V22" fill="#FD9A48" stroke="#7d93b3" stroke-width="1"/><path d="M1.5 22V7L7 1.5H77.5" fill="none" stroke="#fff" stroke-width="1" opacity=".85"/></svg><span class="t" style="left:5px;top:5px;color:#111">Sub Total</span></div>
<div class="a" style="left:876px;top:96px;width:62px;height:22px;"><svg class="a" style="left:0;top:0" width="62" height="22"><path d="M0.5 22V6.5L6.5 0.5H61.5V22" fill="#FD9A48" stroke="#7d93b3" stroke-width="1"/><path d="M1.5 22V7L7 1.5H60.5" fill="none" stroke="#fff" stroke-width="1" opacity=".85"/></svg><span class="t" style="left:5px;top:5px;color:#111">Status</span></div>
<div class="a" style="left:938px;top:96px;width:105px;height:22px;"><svg class="a" style="left:0;top:0" width="105" height="22"><path d="M0.5 22V6.5L6.5 0.5H104.5V22" fill="#FD9A48" stroke="#7d93b3" stroke-width="1"/><path d="M1.5 22V7L7 1.5H103.5" fill="none" stroke="#fff" stroke-width="1" opacity=".85"/></svg><span class="t" style="left:5px;top:5px;color:#111">Flat Discounts</span></div>
<div class="a" style="left:10px;top:118px;width:1168px;height:212px;background:#c8dcf4;border:1px solid #5b7cc1;border-right-color:#7a8ca0;border-bottom-color:#7a8ca0"></div>
<div class="a" style="left:12px;top:122px;width:1162px;height:204px;background:#fff;border:1px solid #a9a9a9;border-right-color:#c9c9c9;border-bottom-color:#c9c9c9"></div>
<div class="a" style="left:11px;top:119px;width:1166px;height:1px;background:#fff"></div>
<div class="a" style="left:604px;top:118px;width:73px;height:2px;background:#c8dcf4"></div>
<div class="t" style="left:21px;top:142px;letter-spacing:.5px">Bill To</div>
<div class="a" style="left:111px;top:136px;width:235px;height:24px;background:#eee;border:1px solid #7a7a7a;"></div>
<div class="t" style="left:112px;top:142px;color:#111">KSB</div>
<svg class="a" style="left:326px;top:137px" width="18" height="18"><defs><radialGradient id="gl" cx=".4" cy=".6" r=".6"><stop offset="0" stop-color="#f4fdff"/><stop offset="1" stop-color="#9fd8f5"/></radialGradient></defs><path d="M10.5 10.5L15.5 15.5" stroke="#5a5a7a" stroke-width="3.2" stroke-linecap="round"/><path d="M11 10L16 15" stroke="#f5a030" stroke-width="1.8" stroke-linecap="round"/><circle cx="7" cy="7" r="5" fill="url(#gl)" stroke="#5a5a78" stroke-width="1.1"/></svg>
<div class="cb" style="left:21px;top:174px"></div>
<div class="t" style="left:38px;top:174px;letter-spacing:.15px">Master Bill</div>
<div class="t" style="left:184px;top:172px;">ID</div>
<div class="a" style="left:216px;top:168px;width:100px;height:24px;background:#fff;border:1px solid #111;"></div>
<svg class="a" style="left:296px;top:169px" width="18" height="18"><defs><radialGradient id="gl" cx=".4" cy=".6" r=".6"><stop offset="0" stop-color="#f4fdff"/><stop offset="1" stop-color="#9fd8f5"/></radialGradient></defs><path d="M10.5 10.5L15.5 15.5" stroke="#5a5a7a" stroke-width="3.2" stroke-linecap="round"/><path d="M11 10L16 15" stroke="#f5a030" stroke-width="1.8" stroke-linecap="round"/><circle cx="7" cy="7" r="5" fill="url(#gl)" stroke="#5a5a78" stroke-width="1.1"/></svg>
<div class="a" style="left:326px;top:168px;width:23px;height:23px;border:1px solid #b0b0b0;background:#fff"></div>
<svg class="a" style="left:326px;top:168px" width="23" height="23"><path d="M3 20L9 9L12 10Z" fill="#d8d8d8" opacity=".6"/><path d="M6.5 16L19.5 3L22 5.5L9 18.5Z" fill="#ffb000" stroke="#d08000" stroke-width=".6"/><path d="M7.5 17L20.5 4" stroke="#ffe070" stroke-width="1"/><path d="M6.5 16L9 18.5L2.5 21.5Z" fill="#f2c8a0"/><path d="M2.5 21.5L3.5 19.5L4.5 20.5Z" fill="#a06040"/><path d="M19.5 3L21 1.5L23 3.5L22 5.5Z" fill="#222"/><path d="M21.5 2L22.5 3" stroke="#e06020" stroke-width="1"/></svg>
<div class="t" style="left:21px;top:205px;letter-spacing:.26px">Billing Contact</div>
<div class="a" style="left:111px;top:201px;width:235px;height:23px;background:#eee;border:1px solid #7a7a7a;"></div>
<div class="t" style="left:112px;top:206px;color:#111">Steven Hyde</div>
<svg class="a" style="left:326px;top:202px" width="18" height="18"><defs><radialGradient id="gl" cx=".4" cy=".6" r=".6"><stop offset="0" stop-color="#f4fdff"/><stop offset="1" stop-color="#9fd8f5"/></radialGradient></defs><path d="M10.5 10.5L15.5 15.5" stroke="#5a5a7a" stroke-width="3.2" stroke-linecap="round"/><path d="M11 10L16 15" stroke="#f5a030" stroke-width="1.8" stroke-linecap="round"/><circle cx="7" cy="7" r="5" fill="url(#gl)" stroke="#5a5a78" stroke-width="1.1"/></svg>
<div class="t" style="left:21px;top:238px;">Address</div>
<div class="a" style="left:111px;top:232px;width:234px;height:49px;background:#eee;border:1px solid #7a7a7a;"></div>
<div class="a" style="left:113px;top:233px;font-size:12px;line-height:16px;color:#111;white-space:nowrap">Lincoln fields,<br>New York<br>New York</div>
<div class="a" style="left:327px;top:233px;width:17px;height:47px;background:#eee;border-left:1px solid #888"></div>
<div class="a" style="left:328px;top:234px;width:15px;height:15px;border:1px solid #9aa;background:#f4f4f4"></div>
<div class="a" style="left:328px;top:249px;width:15px;height:15px;border:1px solid #9aa;background:#f4f4f4"></div>
<div class="a" style="left:328px;top:264px;width:15px;height:15px;border:1px solid #9aa;background:#f4f4f4"></div>
<svg class="a" style="left:328px;top:234px" width="15" height="46"><path d="M3.5 9.5H11.5L7.5 5.5Z" fill="#111"/><path d="M3.5 36.5H11.5L7.5 40.5Z" fill="#111"/></svg>
<div class="t" style="left:364px;top:139px;letter-spacing:.3px">PO No</div>
<div class="a" style="left:486px;top:136px;width:176px;height:24px;background:#fff;border:1px solid #7b8fa6;"></div>
<div class="a" style="left:487px;top:137px;width:174px;height:22px;border:1px solid #c5d6ea"></div>
<svg class="a" style="left:640px;top:138px" width="18" height="18"><defs><radialGradient id="gl" cx=".4" cy=".6" r=".6"><stop offset="0" stop-color="#f4fdff"/><stop offset="1" stop-color="#9fd8f5"/></radialGradient></defs><path d="M10.5 10.5L15.5 15.5" stroke="#5a5a7a" stroke-width="3.2" stroke-linecap="round"/><path d="M11 10L16 15" stroke="#f5a030" stroke-width="1.8" stroke-linecap="round"/><circle cx="7" cy="7" r="5" fill="url(#gl)" stroke="#5a5a78" stroke-width="1.1"/></svg>
<div class="a" style="left:661px;top:136px;width:20px;height:24px;border:1px solid #7b8fa6;background:linear-gradient(#eef3fa,#fdfeff 45%,#c9d9ec)"></div>
<svg class="a" style="left:661px;top:136px" width="20" height="24"><path d="M5.0 10.0H15.0L10.0 15.0Z" fill="#222"/></svg>
<div class="t" style="left:704px;top:139px;letter-spacing:.7px">Terms</div>
<div class="a" style="left:751px;top:136px;width:90px;height:24px;background:#eee;border:1px solid #7a7a7a;"></div>
<svg class="a" style="left:821px;top:137px" width="18" height="18"><defs><radialGradient id="gl" cx=".4" cy=".6" r=".6"><stop offset="0" stop-color="#f4fdff"/><stop offset="1" stop-color="#9fd8f5"/></radialGradient></defs><path d="M10.5 10.5L15.5 15.5" stroke="#5a5a7a" stroke-width="3.2" stroke-linecap="round"/><path d="M11 10L16 15" stroke="#f5a030" stroke-width="1.8" stroke-linecap="round"/><circle cx="7" cy="7" r="5" fill="url(#gl)" stroke="#5a5a78" stroke-width="1.1"/></svg>
<div class="t" style="left:364px;top:172px;">Pay Method</div>
<div class="a" style="left:486px;top:166px;width:231px;height:24px;background:#eee;border:1px solid #7b8fa6;"></div>
<div class="t" style="left:489px;top:171px;color:#111">CASH</div>
<div class="a" style="left:716px;top:166px;width:20px;height:24px;border:1px solid #7b8fa6;background:linear-gradient(#eef3fa,#fdfeff 45%,#c9d9ec)"></div>
<svg class="a" style="left:716px;top:166px" width="20" height="24"><path d="M5.0 10.0H15.0L10.0 15.0Z" fill="#222"/></svg>
<div class="a" style="left:746px;top:166px;width:100px;height:24px;background:#fff;border:1px solid #111;"></div>
<div class="t" style="left:364px;top:199px;">Pay At</div>
<div class="a" style="left:486px;top:193px;width:81px;height:24px;background:#eee;border:1px solid #7b8fa6;"></div>
<div class="t" style="left:489px;top:198px;color:#111">Periodic Bill...</div>
<div class="a" style="left:566px;top:193px;width:20px;height:24px;border:1px solid #7b8fa6;background:linear-gradient(#eef3fa,#fdfeff 45%,#c9d9ec)"></div>
<svg class="a" style="left:566px;top:193px" width="20" height="24"><path d="M5.0 10.0H15.0L10.0 15.0Z" fill="#222"/></svg>
<div class="a" style="left:601px;top:193px;width:79px;height:23px;border:1px solid #9a9a9a;background:#cecece;box-shadow:inset 1px 1px 0 #fafafa"></div>
<div class="t" style="left:612px;top:199px;color:#222">Customize</div>
<div class="t" style="left:364px;top:229px;">Billing Terms</div>
<div class="a" style="left:484px;top:221px;width:193px;height:27px;background:#eee;border:2px solid #B80E14;"></div>
<div class="t" style="left:487px;top:229px;color:#111">Daily_Reset OFF</div>
<svg class="a" style="left:654px;top:224px" width="18" height="18"><defs><radialGradient id="gl" cx=".4" cy=".6" r=".6"><stop offset="0" stop-color="#f4fdff"/><stop offset="1" stop-color="#9fd8f5"/></radialGradient></defs><path d="M10.5 10.5L15.5 15.5" stroke="#5a5a7a" stroke-width="3.2" stroke-linecap="round"/><path d="M11 10L16 15" stroke="#f5a030" stroke-width="1.8" stroke-linecap="round"/><circle cx="7" cy="7" r="5" fill="url(#gl)" stroke="#5a5a78" stroke-width="1.1"/></svg>
<div class="t" style="left:704px;top:229px;">Pay Type</div>
<div class="a" style="left:766px;top:223px;width:61px;height:24px;background:#eee;border:1px solid #7b8fa6;"></div>
<div class="t" style="left:769px;top:228px;color:#111">Bill</div>
<div class="a" style="left:826px;top:223px;width:20px;height:24px;border:1px solid #7b8fa6;background:linear-gradient(#eef3fa,#fdfeff 45%,#c9d9ec)"></div>
<svg class="a" style="left:826px;top:223px" width="20" height="24"><path d="M5.0 10.0H15.0L10.0 15.0Z" fill="#222"/></svg>
<div class="t" style="left:364px;top:261px;letter-spacing:.1px">Second Invoice Date</div>
<div class="a" style="left:486px;top:255px;width:85px;height:23px;background:#fff;border:1px solid #7b8fa6;"></div>
<div class="a" style="left:570px;top:255px;width:16px;height:23px;border:1px solid #7b8fa6;background:linear-gradient(#eef3fa,#fdfeff 45%,#c9d9ec)"></div>
<svg class="a" style="left:570px;top:255px" width="16" height="23"><path d="M3.0 9.5H13.0L8.0 14.5Z" fill="#9aa4ae"/></svg>
<div class="cb" style="left:596px;top:266px"></div>
<div class="t" style="left:613px;top:265px;">View First Invoice</div>
<div class="t" style="left:724px;top:265px;letter-spacing:.25px">Re-sell Certificate No.</div>
<div class="a" style="left:856px;top:255px;width:100px;height:24px;background:#eee;border:1px solid #7a7a7a;"></div>
<svg class="a" style="left:935px;top:256px" width="18" height="18"><defs><radialGradient id="gl" cx=".4" cy=".6" r=".6"><stop offset="0" stop-color="#f4fdff"/><stop offset="1" stop-color="#9fd8f5"/></radialGradient></defs><path d="M10.5 10.5L15.5 15.5" stroke="#5a5a7a" stroke-width="3.2" stroke-linecap="round"/><path d="M11 10L16 15" stroke="#f5a030" stroke-width="1.8" stroke-linecap="round"/><circle cx="7" cy="7" r="5" fill="url(#gl)" stroke="#5a5a78" stroke-width="1.1"/></svg>
<div class="a" style="left:10px;top:334px;width:67px;height:22px;"><svg class="a" style="left:0;top:0" width="67" height="22"><path d="M0.5 22V6.5L6.5 0.5H66.5V22" fill="#C64E2E" stroke="#5b7cc1" stroke-width="1"/><path d="M1.5 22V7L7 1.5H65.5" fill="none" stroke="#fff" stroke-width="1" opacity=".85"/></svg><span class="t" style="left:5px;top:5px;color:#fff;font-weight:bold">Item(s)</span></div>
<div class="a" style="left:77px;top:334px;width:58px;height:22px;"><svg class="a" style="left:0;top:0" width="58" height="22"><path d="M0.5 22V6.5L6.5 0.5H57.5V22" fill="#FD9A48" stroke="#7d93b3" stroke-width="1"/><path d="M1.5 22V7L7 1.5H56.5" fill="none" stroke="#fff" stroke-width="1" opacity=".85"/></svg><span class="t" style="left:5px;top:5px;color:#111">Labor</span></div>
<div class="a" style="left:8px;top:356px;width:1172px;height:315px;background:#c8dcf4;border:1px solid #5b7cc1;border-right-color:#7a8ca0;border-bottom-color:#7a8ca0"></div>
<div class="a" style="left:11px;top:356px;width:65px;height:2px;background:#c8dcf4"></div>
<div class="a" style="left:10px;top:360px;width:1166px;height:34px;background:#fff;border:1px solid #b0b0b0"></div>
<div class="t" style="left:45px;top:369px;letter-spacing:.3px">Search :</div>
<div class="t" style="left:120px;top:369px;letter-spacing:.4px">Asset</div>
<div class="a" style="left:162px;top:365px;width:120px;height:24px;background:#fff;border:1px solid #111;"></div>
<div class="t" style="left:362px;top:369px;">Product</div>
<div class="a" style="left:412px;top:365px;width:195px;height:24px;background:#fff;border:1px solid #111;"></div>
<div class="t" style="left:625px;top:369px;">Qty</div>
<div class="a" style="left:647px;top:365px;width:40px;height:24px;background:#fff;border:1px solid #111;"></div>
<div class="t" style="left:649px;top:371px;color:#111">1</div>
<div class="cb" style="left:707px;top:372px"></div>
<div class="t" style="left:724px;top:371px;">Update existing lines</div>
<div class="a" style="left:10px;top:394px;width:1166px;height:1px;background:#fff"></div>
<div class="a" style="left:10px;top:395px;width:1166px;height:272px;background:#fff;border:1px solid #b0b0b0"></div>
<div class="a" style="left:11px;top:396px;width:1164px;height:270px;background:#fff"></div>
<div class="a" style="left:12px;top:397px;width:1163px;height:1px;background:#6f8294"></div>
<div class="a" style="left:12px;top:397px;width:1px;height:268px;background:#7d8fa2"></div>
<div class="a" style="left:13px;top:398px;width:1161px;height:249px;overflow:hidden">
<div class="a" style="left:0;top:0;width:1180px;height:20px;background:#ff6e3c"></div>
<div class="a" style="left:0px;top:0;width:14px;height:19px;background:#C64E2E;border:1px solid #8a3a22;box-shadow:inset 1px 1px 0 #ff6e3c"></div>
<div class="a" style="left:0px;top:4px;width:14px;color:#fff;font-size:12px;line-height:14px;text-align:center;white-space:nowrap;overflow:hidden">T</div>
<div class="a" style="left:14px;top:20px;width:1px;height:18px;background:#c47a40"></div>
<div class="a" style="left:15px;top:0;width:14px;height:19px;background:#C64E2E;border:1px solid #8a3a22;box-shadow:inset 1px 1px 0 #ff6e3c"></div>
<div class="a" style="left:15px;top:4px;width:14px;color:#fff;font-size:12px;line-height:14px;text-align:center;white-space:nowrap;overflow:hidden">C</div>
<div class="a" style="left:29px;top:20px;width:1px;height:18px;background:#c47a40"></div>
<div class="a" style="left:30px;top:0;width:14px;height:19px;background:#C64E2E;border:1px solid #8a3a22;box-shadow:inset 1px 1px 0 #ff6e3c"></div>
<div class="a" style="left:30px;top:4px;width:14px;color:#fff;font-size:12px;line-height:14px;text-align:center;white-space:nowrap;overflow:hidden">X</div>
<div class="a" style="left:44px;top:20px;width:1px;height:18px;background:#c47a40"></div>
<div class="a" style="left:45px;top:0;width:14px;height:19px;background:#C64E2E;border:1px solid #8a3a22;box-shadow:inset 1px 1px 0 #ff6e3c"></div>
<div class="a" style="left:45px;top:4px;width:14px;color:#fff;font-size:12px;line-height:14px;text-align:center;white-space:nowrap;overflow:hidden">M</div>
<div class="a" style="left:59px;top:20px;width:1px;height:18px;background:#c47a40"></div>
<div class="a" style="left:60px;top:0;width:14px;height:19px;background:#C64E2E;border:1px solid #8a3a22;box-shadow:inset 1px 1px 0 #ff6e3c"></div>
<div class="a" style="left:60px;top:4px;width:14px;color:#fff;font-size:12px;line-height:14px;text-align:center;white-space:nowrap;overflow:hidden">S</div>
<div class="a" style="left:74px;top:20px;width:1px;height:18px;background:#c47a40"></div>
<div class="a" style="left:75px;top:0;width:19px;height:19px;background:#C64E2E;border:1px solid #8a3a22;box-shadow:inset 1px 1px 0 #ff6e3c"></div>
<div class="a" style="left:75px;top:4px;width:19px;color:#fff;font-size:12px;line-height:14px;text-align:center;white-space:nowrap;overflow:hidden">I.C</div>
<div class="a" style="left:94px;top:20px;width:1px;height:18px;background:#c47a40"></div>
<div class="a" style="left:95px;top:0;width:19px;height:19px;background:#C64E2E;border:1px solid #8a3a22;box-shadow:inset 1px 1px 0 #ff6e3c"></div>
<div class="a" style="left:95px;top:4px;width:19px;color:#fff;font-size:12px;line-height:14px;text-align:center;white-space:nowrap;overflow:hidden">I....</div>
<div class="a" style="left:114px;top:20px;width:1px;height:18px;background:#c47a40"></div>
<div class="a" style="left:115px;top:0;width:19px;height:19px;background:#C64E2E;border:1px solid #8a3a22;box-shadow:inset 1px 1px 0 #ff6e3c"></div>
<div class="a" style="left:115px;top:4px;width:19px;color:#fff;font-size:12px;line-height:14px;text-align:center;white-space:nowrap;overflow:hidden">I.I</div>
<div class="a" style="left:134px;top:20px;width:1px;height:18px;background:#c47a40"></div>
<div class="a" style="left:135px;top:0;width:74px;height:19px;background:#C64E2E;border:1px solid #8a3a22;box-shadow:inset 1px 1px 0 #ff6e3c"></div>
<div class="a" style="left:135px;top:4px;width:74px;color:#fff;font-size:12px;line-height:14px;text-align:center;white-space:nowrap;overflow:hidden">Status</div>
<div class="a" style="left:209px;top:20px;width:1px;height:18px;background:#c47a40"></div>
<div class="a" style="left:210px;top:0;width:19px;height:19px;background:#C64E2E;border:1px solid #8a3a22;box-shadow:inset 1px 1px 0 #ff6e3c"></div>
<div class="a" style="left:210px;top:4px;width:19px;color:#fff;font-size:12px;line-height:14px;text-align:center;white-space:nowrap;overflow:hidden">L</div>
<div class="a" style="left:229px;top:20px;width:1px;height:18px;background:#c47a40"></div>
<div class="a" style="left:230px;top:0;width:44px;height:19px;background:#C64E2E;border:1px solid #8a3a22;box-shadow:inset 1px 1px 0 #ff6e3c"></div>
<div class="a" style="left:230px;top:4px;width:44px;color:#fff;font-size:12px;line-height:14px;text-align:center;white-space:nowrap;overflow:hidden">Action</div>
<div class="a" style="left:274px;top:20px;width:1px;height:18px;background:#c47a40"></div>
<div class="a" style="left:275px;top:0;width:99px;height:19px;background:#C64E2E;border:1px solid #8a3a22;box-shadow:inset 1px 1px 0 #ff6e3c"></div>
<div class="a" style="left:275px;top:4px;width:99px;color:#fff;font-size:12px;line-height:14px;text-align:center;white-space:nowrap;overflow:hidden">Product ID</div>
<div class="a" style="left:374px;top:20px;width:1px;height:18px;background:#c47a40"></div>
<div class="a" style="left:375px;top:0;width:259px;height:19px;background:#C64E2E;border:1px solid #8a3a22;box-shadow:inset 1px 1px 0 #ff6e3c"></div>
<div class="a" style="left:375px;top:4px;width:259px;color:#fff;font-size:12px;line-height:14px;text-align:center;white-space:nowrap;overflow:hidden">Description</div>
<div class="a" style="left:634px;top:20px;width:1px;height:18px;background:#c47a40"></div>
<div class="a" style="left:635px;top:0;width:54px;height:19px;background:#C64E2E;border:1px solid #8a3a22;box-shadow:inset 1px 1px 0 #ff6e3c"></div>
<div class="a" style="left:635px;top:4px;width:54px;color:#fff;font-size:12px;line-height:14px;text-align:center;white-space:nowrap;overflow:hidden">Duration</div>
<div class="a" style="left:689px;top:20px;width:1px;height:18px;background:#c47a40"></div>
<div class="a" style="left:690px;top:0;width:29px;height:19px;background:#C64E2E;border:1px solid #8a3a22;box-shadow:inset 1px 1px 0 #ff6e3c"></div>
<div class="a" style="left:690px;top:4px;width:29px;color:#fff;font-size:12px;line-height:14px;text-align:center;white-space:nowrap;overflow:hidden">Qty</div>
<div class="a" style="left:719px;top:20px;width:1px;height:18px;background:#c47a40"></div>
<div class="a" style="left:720px;top:0;width:39px;height:19px;background:#C64E2E;border:1px solid #8a3a22;box-shadow:inset 1px 1px 0 #ff6e3c"></div>
<div class="a" style="left:720px;top:4px;width:39px;color:#fff;font-size:12px;line-height:14px;text-align:center;white-space:nowrap;overflow:hidden">Unit</div>
<div class="a" style="left:759px;top:20px;width:1px;height:18px;background:#c47a40"></div>
<div class="a" style="left:760px;top:0;width:89px;height:19px;background:#C64E2E;border:1px solid #8a3a22;box-shadow:inset 1px 1px 0 #ff6e3c"></div>
<div class="a" style="left:760px;top:4px;width:89px;color:#fff;font-size:12px;line-height:14px;text-align:center;white-space:nowrap;overflow:hidden">Day/Each Price</div>
<div class="a" style="left:849px;top:20px;width:1px;height:18px;background:#c47a40"></div>
<div class="a" style="left:850px;top:0;width:69px;height:19px;background:#C64E2E;border:1px solid #8a3a22;box-shadow:inset 1px 1px 0 #ff6e3c"></div>
<div class="a" style="left:850px;top:4px;width:69px;color:#fff;font-size:12px;line-height:14px;text-align:center;white-space:nowrap;overflow:hidden">Week Price</div>
<div class="a" style="left:919px;top:20px;width:1px;height:18px;background:#c47a40"></div>
<div class="a" style="left:920px;top:0;width:69px;height:19px;background:#C64E2E;border:1px solid #8a3a22;box-shadow:inset 1px 1px 0 #ff6e3c"></div>
<div class="a" style="left:920px;top:4px;width:69px;color:#fff;font-size:12px;line-height:14px;text-align:center;white-space:nowrap;overflow:hidden">Month Price</div>
<div class="a" style="left:989px;top:20px;width:1px;height:18px;background:#c47a40"></div>
<div class="a" style="left:990px;top:0;width:54px;height:19px;background:#C64E2E;border:1px solid #8a3a22;box-shadow:inset 1px 1px 0 #ff6e3c"></div>
<div class="a" style="left:990px;top:4px;width:54px;color:#fff;font-size:12px;line-height:14px;text-align:center;white-space:nowrap;overflow:hidden">Discount</div>
<div class="a" style="left:1044px;top:20px;width:1px;height:18px;background:#c47a40"></div>
<div class="a" style="left:1045px;top:0;width:59px;height:19px;background:#C64E2E;border:1px solid #8a3a22;box-shadow:inset 1px 1px 0 #ff6e3c"></div>
<div class="a" style="left:1045px;top:4px;width:59px;color:#fff;font-size:12px;line-height:14px;text-align:center;white-space:nowrap;overflow:hidden">Net Each</div>
<div class="a" style="left:1104px;top:20px;width:1px;height:18px;background:#c47a40"></div>
<div class="a" style="left:1105px;top:0;width:85px;height:19px;background:#C64E2E;border:1px solid #8a3a22;box-shadow:inset 1px 1px 0 #ff6e3c"></div>
<div class="a" style="left:1105px;top:4px;width:85px;color:#fff;font-size:12px;line-height:14px;text-align:center;white-space:nowrap;overflow:hidden">Net Discount</div>
<div class="a" style="left:1190px;top:20px;width:1px;height:18px;background:#c47a40"></div>
<div class="a" style="left:0;top:38px;width:1180px;height:1px;background:#c47a40"></div>
<div class="cb" style="left:2px;top:23px"></div>
<div class="cb" style="left:16px;top:23px"></div>
<div class="cb" style="left:31px;top:23px"></div>
<div class="cb" style="left:46px;top:23px"></div>
<div class="cb" style="left:61px;top:23px"></div>
<div class="cb" style="left:78px;top:23px"></div>
<div class="cb" style="left:98px;top:23px"></div>
<div class="cb" style="left:118px;top:23px"></div>
<div class="a" style="left:136px;top:23px;font-size:12px;line-height:14px;color:#111;white-space:nowrap">Reserved</div>
<div class="cb" style="left:213px;top:23px"></div>
<div class="a" style="left:231px;top:23px;font-size:12px;line-height:14px;color:#111;white-space:nowrap">Rent</div>
<div class="a" style="left:276px;top:23px;font-size:12px;line-height:14px;color:#111;white-space:nowrap">CAMERAHD</div>
<div class="a" style="left:376px;top:23px;font-size:12px;line-height:14px;color:#111;white-space:nowrap">&nbsp;&nbsp;CAMERAHD</div>
<div class="a" style="left:636px;top:23px;font-size:12px;line-height:14px;color:#111;white-space:nowrap">40d</div>
<div class="a" style="left:690px;top:23px;width:28px;text-align:right;font-size:12px;line-height:14px;color:#111;white-space:nowrap">1</div>
<div class="a" style="left:721px;top:23px;font-size:12px;line-height:14px;color:#111;white-space:nowrap">Day</div>
<div class="a" style="left:760px;top:23px;width:88px;text-align:right;font-size:12px;line-height:14px;color:#111;white-space:nowrap">100.00</div>
<div class="a" style="left:850px;top:23px;width:68px;text-align:right;font-size:12px;line-height:14px;color:#111;white-space:nowrap">300.00</div>
<div class="a" style="left:920px;top:23px;width:68px;text-align:right;font-size:12px;line-height:14px;color:#111;white-space:nowrap">900.00</div>
<div class="a" style="left:990px;top:23px;width:53px;text-align:right;font-size:12px;line-height:14px;color:#111;white-space:nowrap">0.00</div>
<div class="a" style="left:1045px;top:23px;width:58px;text-align:right;font-size:12px;line-height:14px;color:#111;white-space:nowrap">100.00</div>
<div class="a" style="left:1105px;top:23px;width:59px;text-align:right;font-size:12px;line-height:14px;color:#111;white-space:nowrap">0.00</div>
</div>
<svg class="a" style="left:14px;top:421px" width="12" height="12"><path d="M2.5 6.5L4.5 10L10 3" stroke="#111" stroke-width="2" fill="none"/></svg>
<div class="a" style="left:1173px;top:397px;width:1px;height:268px;background:#7d8fa2"></div>
<div class="a" style="left:13px;top:647px;width:1160px;height:1px;background:#7d8fa2"></div>
<div class="a" style="left:13px;top:648px;width:1160px;height:14px;background:#eee"></div>
<div class="a" style="left:13px;top:662px;width:1160px;height:2px;background:#c9dcf2"></div>
<div class="a" style="left:12px;top:664px;width:1162px;height:1px;background:#7d8fa2"></div>
<div class="a" style="left:13px;top:648px;width:15px;height:15px;background:#eee;border-top:1px solid #fff;border-left:1px solid #fff;border-bottom:1px solid #7d8fa2"></div>
<svg class="a" style="left:14px;top:648px" width="14" height="15"><path d="M9.5 3.5V11.5L5 7.5Z" fill="#222"/></svg>
<div class="a" style="left:28px;top:647px;width:543px;height:16px;border:1px solid #ffc300;background:linear-gradient(#efc09a,#e69d6a)"></div>
<div class="a" style="left:297px;top:651px;width:1px;height:9px;background:#7a7595;box-shadow:1px 1px 0 #fbe0c8"></div>
<div class="a" style="left:299px;top:651px;width:1px;height:9px;background:#7a7595;box-shadow:1px 1px 0 #fbe0c8"></div>
<div class="a" style="left:301px;top:651px;width:1px;height:9px;background:#7a7595;box-shadow:1px 1px 0 #fbe0c8"></div>
<div class="a" style="left:1156px;top:648px;width:16px;height:15px;background:#eee;border-left:1px solid #7d8fa2;border-right:1px solid #7d8fa2;border-bottom:1px solid #7d8fa2;box-shadow:inset 1px 1px 0 #fff"></div>
<svg class="a" style="left:1157px;top:648px" width="15" height="15"><path d="M5.5 3.5V11.5L10 7.5Z" fill="#222"/></svg>
<div class="t" style="left:70px;top:679px;font-weight:bold;font-size:14px;color:#222">Items</div>
<div class="a" style="left:120px;top:673px;width:100px;height:24px;background:#eee;border:1px solid #7a7a7a"></div>
<div class="t" style="left:121px;top:678px;font-weight:bold;font-size:14px;color:#1a1a1a">1500.00</div>
<div class="t" style="left:235px;top:679px;font-weight:bold;font-size:14px;color:#222">Labor</div>
<div class="a" style="left:287px;top:673px;width:100px;height:24px;background:#eee;border:1px solid #7a7a7a"></div>
<div class="t" style="left:446px;top:679px;font-weight:bold;font-size:14px;color:#222">Sub Total</div>
<div class="a" style="left:525px;top:673px;width:100px;height:24px;background:#eee;border:1px solid #7a7a7a"></div>
<div class="t" style="left:526px;top:678px;font-weight:bold;font-size:14px;color:#1a1a1a">1500.00</div>
<div class="t" style="left:636px;top:679px;font-weight:bold;font-size:14px;color:#222">Tax</div>
<div class="a" style="left:670px;top:673px;width:100px;height:24px;background:#eee;border:1px solid #7a7a7a"></div>
<div class="a" style="left:813px;top:673px;width:89px;height:23px;border:1px solid #c8c8c8;background:#fff"></div>
<div class="t" style="left:842px;top:679px;font-weight:bold;font-size:14px;color:#222">Total</div>
<div class="a" style="left:906px;top:671px;width:101px;height:26px;background:#eee;border:2px solid #B01E22"></div>
<div class="t" style="left:908px;top:678px;font-weight:bold;font-size:14px;color:#1a1a1a">1500.00</div>
<div class="a" style="left:8px;top:707px;width:1171px;height:24px;background:#fff;border-top:2px solid #8a8a8a;border-left:1px solid #c4c4c4;border-right:1px solid #c8c8c8;border-bottom:1px solid #c4c4c4;box-shadow:inset 1px 0 0 #808080"></div>
</body></html>
